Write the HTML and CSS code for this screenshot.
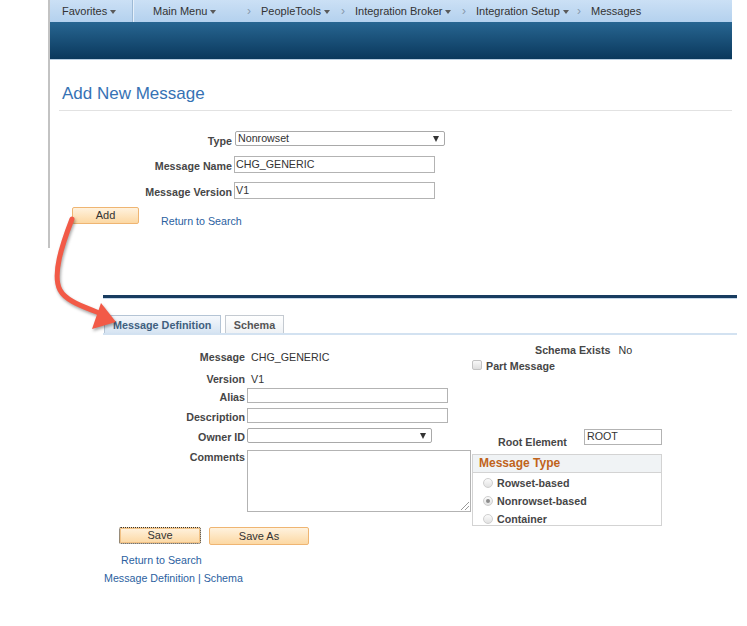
FILE: index.html
```html
<!DOCTYPE html>
<html lang="en">
<head>
<meta charset="utf-8">
<title>Add New Message</title>
<link rel="stylesheet" href="styles.css">
</head>
<body>
<div class="page">
  <div class="shot1">
    <div class="nav">
      <div class="nav-cell nav-first"><span>Favorites</span><i class="caret"></i></div>
      <div class="nav-cell nav-divider"></div>
      <div class="nav-cell"><span>Main Menu</span><i class="caret"></i></div>
      <div class="nav-cell"><span class="chev">&#8250;</span><span>PeopleTools</span><i class="caret"></i></div>
      <div class="nav-cell"><span class="chev">&#8250;</span><span>Integration Broker</span><i class="caret"></i></div>
      <div class="nav-cell"><span class="chev">&#8250;</span><span>Integration Setup</span><i class="caret"></i></div>
      <div class="nav-cell"><span class="chev">&#8250;</span><span>Messages</span></div>
    </div>
    <div class="band"></div>
    <h1 class="title">Add New Message</h1>
    <div class="rule"></div>
    <div class="form1">
      <div class="row1">
        <div class="lbl1">Type</div>
        <div class="sel sel-type"><span>Nonrowset</span><i class="tri"></i></div>
      </div>
      <div class="row1 gap1">
        <div class="lbl1">Message Name</div>
        <div class="inp1">CHG_GENERIC</div>
      </div>
      <div class="row1 gap1">
        <div class="lbl1">Message Version</div>
        <div class="inp1">V1</div>
      </div>
    </div>
    <div class="actions1">
      <div class="btn btn-add">Add</div>
      <a class="link link-top">Return to Search</a>
    </div>
  </div>

  <div class="shot2">
    <div class="topline"></div>
    <div class="tabs">
      <div class="tab tab-active">Message Definition</div>
      <div class="tab tab-plain">Schema</div>
    </div>
    <div class="cols2">
      <div class="leftcol">
        <div class="row2 r-message">
          <div class="lbl2">Message</div>
          <div class="val2">CHG_GENERIC</div>
        </div>
        <div class="row2 r-version">
          <div class="lbl2">Version</div>
          <div class="val2">V1</div>
        </div>
        <div class="row2 r-alias">
          <div class="lbl2 lbl-field">Alias</div>
          <div class="inp2"></div>
        </div>
        <div class="row2 r-field">
          <div class="lbl2 lbl-field">Description</div>
          <div class="inp2"></div>
        </div>
        <div class="row2 r-field">
          <div class="lbl2 lbl-field">Owner ID</div>
          <div class="sel sel-owner"><span></span><i class="tri"></i></div>
        </div>
        <div class="row2 r-comments">
          <div class="lbl2">Comments</div>
          <div class="textarea"><span class="grip"></span></div>
        </div>
      </div>
      <div class="rightcol">
        <div class="schema-row"><span class="b">Schema Exists</span><span class="no">No</span></div>
        <div class="part-row"><span class="checkbox"></span><span class="b">Part Message</span></div>
        <div class="root-row">
          <div class="root-lbl">Root Element</div>
          <div class="inp-root">ROOT</div>
        </div>
        <div class="mtype">
          <div class="mtype-head">Message Type</div>
          <div class="radio-row"><span class="radio"></span><span class="b">Rowset-based</span></div>
          <div class="radio-row"><span class="radio radio-on"></span><span class="b">Nonrowset-based</span></div>
          <div class="radio-row"><span class="radio"></span><span class="b">Container</span></div>
        </div>
      </div>
    </div>
    <div class="actions2">
      <div class="btn btn-save">Save</div>
      <div class="btn btn-saveas">Save As</div>
    </div>
    <div class="ret2"><a class="link">Return to Search</a></div>
    <div class="links2"><a class="link">Message Definition</a> <span class="pipe">|</span> <a class="link">Schema</a></div>
  </div>

  <svg class="arrow" width="747" height="626" viewBox="0 0 747 626">
    <path d="M72,219 C62,245 52,275 60,290 C66,301 82,306 99,313" fill="none" stroke="#f25a47" stroke-width="5" stroke-linecap="round"/>
    <polygon points="101,303 116,322 92,329" fill="#f25a47"/>
  </svg>
</div>
</body>
</html>
```

FILE: styles.css
```css
body {
  margin: 0;
  font-family: "Liberation Sans", Arial, sans-serif;
  font-size: 10.7px;
  color: #333;
  background: #fff;
}

.page {
  position: relative;
  width: 747px;
  height: 626px;
  overflow: hidden;
}

/* ---------- top screenshot ---------- */
.shot1 {
  margin-left: 48px;
  width: 682px;
  height: 248px;
  border-left: 2px solid #c3c3c3;
}

.nav {
  display: grid;
  grid-template-columns: 82px 21px 94px 94px 121px 115px 1fr;
  height: 22px;
  align-items: center;
  background: linear-gradient(#cbe0f5, #b4d1ee);
}

.nav-cell {
  display: flex;
  align-items: center;
  white-space: nowrap;
  color: #333;
  font-size: 11px;
  line-height: 14px;
}

.nav-first {
  padding-left: 12px;
}

.nav-divider {
  align-self: stretch;
  background: linear-gradient(to right, #9dbad6 0, #9dbad6 1px, #e6f0fa 1px, #e6f0fa 2px, transparent 2px);
}

.caret {
  display: inline-block;
  width: 0;
  height: 0;
  border-left: 3.5px solid transparent;
  border-right: 3.5px solid transparent;
  border-top: 4px solid #5a5a5a;
  margin-left: 3px;
  margin-top: 1px;
}

.chev {
  width: 14px;
  color: #8799ad;
  font-size: 12px;
}

.band {
  height: 37px;
  background: linear-gradient(#286692, #0a385c);
  border-bottom: 1px solid #b9cfe2;
}

.title {
  margin: 24px 0 0 12px;
  font-size: 17px;
  font-weight: normal;
  line-height: 20px;
  color: #3672b4;
}

.rule {
  margin: 6px 0 0 9px;
  height: 1px;
  background: #e2e2e2;
}

.form1 {
  margin-top: 20px;
}

.row1 {
  display: flex;
  align-items: flex-start;
}

.gap1 {
  margin-top: 9px;
}

.lbl1 {
  width: 182px;
  text-align: right;
  padding-top: 4px;
  line-height: 12px;
  font-weight: bold;
  color: #464646;
}

.sel {
  box-sizing: border-box;
  display: flex;
  align-items: center;
  justify-content: space-between;
  height: 15px;
  border: 1px solid #a9a9a9;
  border-radius: 2px;
  background: #fff;
  padding: 0 5px 0 2px;
  line-height: 13px;
}

.sel-type {
  width: 210px;
  margin-left: 3px;
}

.tri {
  display: inline-block;
  width: 0;
  height: 0;
  border-left: 3.5px solid transparent;
  border-right: 3.5px solid transparent;
  border-top: 6px solid #333;
}

.inp1 {
  box-sizing: border-box;
  width: 201px;
  height: 17px;
  margin-left: 2px;
  border: 1px solid #b3b3b3;
  padding-left: 1px;
  line-height: 14px;
  color: #333;
}

.actions1 {
  display: flex;
  align-items: flex-start;
  margin-top: 8px;
  padding-left: 22px;
}

.btn {
  box-sizing: border-box;
  height: 17px;
  border: 1px solid #efb572;
  border-radius: 2px;
  background: linear-gradient(#fff2de, #fcd8a3);
  text-align: center;
  line-height: 15px;
  color: #333;
  font-size: 11px;
}

.btn-add {
  width: 67px;
}

.link {
  color: #2c5f9f;
  text-decoration: none;
  line-height: 14px;
}

.link-top {
  margin-left: 22px;
  padding-top: 7px;
}

/* ---------- bottom screenshot ---------- */
.shot2 {
  margin-left: 103px;
  margin-top: 47px;
  width: 634px;
}

.topline {
  height: 3px;
  background: #183c60;
  border-bottom: 1px solid #c6d8ea;
}

.tabs {
  display: flex;
  align-items: flex-end;
  gap: 4px;
  margin-top: 16px;
  padding-left: 1px;
  border-bottom: 2px solid #d3e2f1;
}

.tab {
  box-sizing: border-box;
  height: 18px;
  border: 1px solid #c4cad1;
  border-bottom: none;
  font-weight: bold;
  line-height: 18px;
  font-size: 10.8px;
  white-space: nowrap;
}

.tab-active {
  width: 117px;
  padding-left: 8px;
  background: linear-gradient(#f5f8fc, #d6e4f2);
  border-color: #b4c4d5;
  color: #40607f;
}

.tab-plain {
  width: 59px;
  text-align: center;
  background: linear-gradient(#ffffff, #eff2f5);
  color: #555;
}

.cols2 {
  display: flex;
  align-items: flex-start;
}

.leftcol {
  width: 369px;
}

.row2 {
  display: flex;
  align-items: flex-start;
}

.lbl2 {
  width: 142px;
  text-align: right;
  font-weight: bold;
  color: #464646;
  line-height: 14px;
}

.lbl-field {
  padding-top: 2px;
}

.val2 {
  padding-left: 6px;
  line-height: 14px;
  color: #333;
}

.r-message { margin-top: 15px; }
.r-version { margin-top: 8px; }
.r-alias { margin-top: 2px; }
.r-field { margin-top: 4px; }
.r-comments { margin-top: 6px; }

.inp2 {
  box-sizing: border-box;
  width: 201px;
  height: 15px;
  margin-left: 2px;
  border: 1px solid #b3b3b3;
}

.sel-owner {
  width: 185px;
  margin-left: 2px;
  padding-right: 5px;
}

.textarea {
  position: relative;
  box-sizing: border-box;
  width: 224px;
  height: 62px;
  margin-left: 2px;
  border: 1px solid #b3b3b3;
}

.grip {
  position: absolute;
  right: 1px;
  bottom: 1px;
  width: 8px;
  height: 8px;
  background: linear-gradient(135deg, transparent 46%, #9a9a9a 46%, #9a9a9a 54%, transparent 54%, transparent 70%, #9a9a9a 70%, #9a9a9a 78%, transparent 78%);
}

.rightcol {
  width: 190px;
}

.b {
  font-weight: bold;
  color: #464646;
}

.schema-row {
  margin-top: 8px;
  padding-left: 63px;
  line-height: 14px;
  white-space: nowrap;
}

.no {
  margin-left: 8px;
  color: #333;
}

.part-row {
  display: flex;
  align-items: flex-start;
  margin-top: 2px;
  line-height: 14px;
}

.checkbox {
  box-sizing: border-box;
  width: 10px;
  height: 10px;
  margin-top: 1px;
  margin-right: 4px;
  border: 1px solid #c3c3c3;
  border-radius: 2px;
  background: linear-gradient(#f8f8f8, #dedede);
}

.root-row {
  display: flex;
  align-items: flex-start;
  margin-top: 56px;
  height: 20px;
}

.root-lbl {
  box-sizing: border-box;
  width: 112px;
  padding-left: 26px;
  padding-top: 6px;
  line-height: 14px;
  font-weight: bold;
  color: #464646;
}

.inp-root {
  box-sizing: border-box;
  width: 78px;
  height: 16px;
  border: 1px solid #b3b3b3;
  padding-left: 2px;
  line-height: 13px;
  color: #333;
}

.mtype {
  box-sizing: border-box;
  margin-top: 5px;
  height: 72px;
  border: 1px solid #d3d3d3;
  overflow: hidden;
}

.mtype-head {
  height: 17px;
  background: #f0f3f5;
  border-bottom: 1px solid #d3d3d3;
  padding-left: 6px;
  line-height: 17px;
  font-size: 12px;
  font-weight: bold;
  color: #c0631b;
}

.mtype-head + .radio-row {
  margin-top: 1px;
}

.radio-row {
  display: flex;
  align-items: center;
  height: 18px;
  padding-left: 10px;
}

.radio {
  box-sizing: border-box;
  display: flex;
  align-items: center;
  justify-content: center;
  width: 10px;
  height: 10px;
  margin-right: 4px;
  border: 1px solid #cfcfcf;
  border-radius: 50%;
  background: linear-gradient(#fbfbfb, #e2e2e2);
}

.radio-on::after {
  content: "";
  width: 4px;
  height: 4px;
  border-radius: 50%;
  background: #8c8c8c;
}

.actions2 {
  display: flex;
  margin-top: 1px;
  padding-left: 16px;
  gap: 8px;
}

.btn-save {
  width: 82px;
  border: 1px dotted #333;
  box-shadow: inset 0 0 0 1px #f1c184;
}

.btn-saveas {
  width: 100px;
  height: 18px;
  line-height: 16px;
}

.ret2 {
  margin-top: 8px;
  padding-left: 18px;
  line-height: 14px;
}

.links2 {
  margin-top: 4px;
  padding-left: 1px;
  line-height: 14px;
}

.pipe {
  color: #2c5f9f;
}

/* overlay annotation */
.arrow {
  position: absolute;
  left: 0;
  top: 0;
  pointer-events: none;
  filter: drop-shadow(1px 2px 1.5px rgba(0, 0, 0, 0.35));
}
```
